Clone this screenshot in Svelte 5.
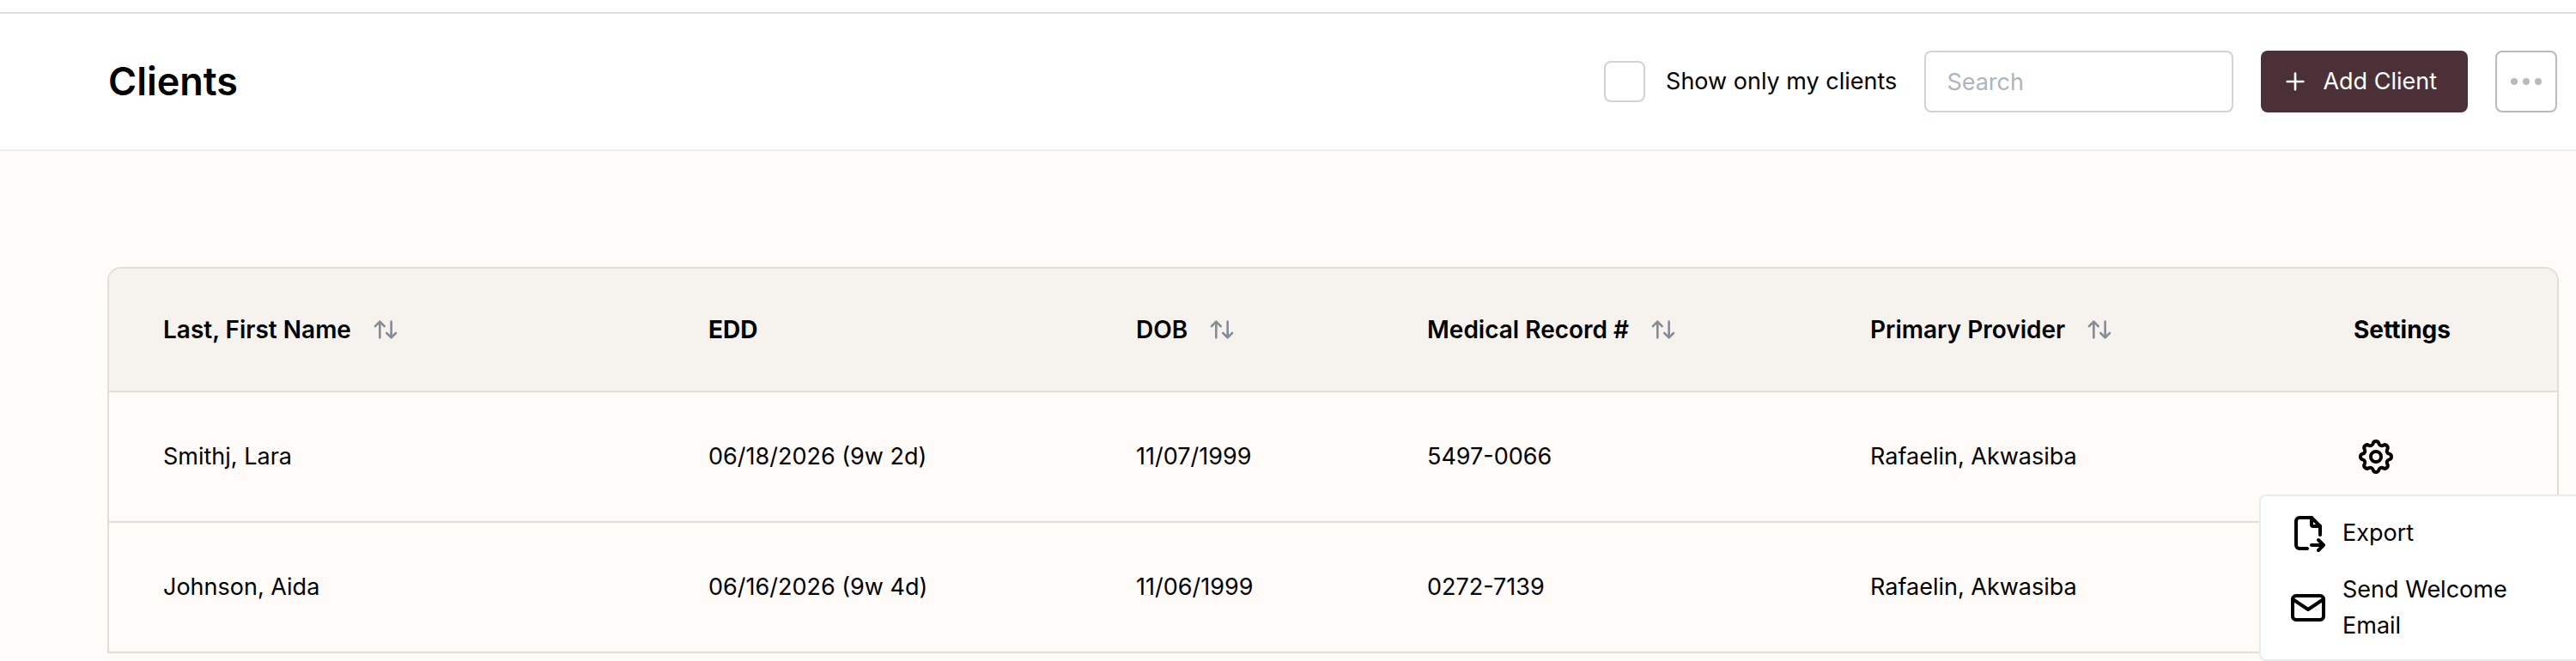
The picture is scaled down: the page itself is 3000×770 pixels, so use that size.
<script lang="ts">
  type Client = {
    name: string;
    edd: string;
    dob: string;
    record: string;
    provider: string;
  };

  const columns = [
    { label: "Last, First Name", sortable: true, width: 635 },
    { label: "EDD", sortable: false, width: 498 },
    { label: "DOB", sortable: true, width: 339 },
    { label: "Medical Record #", sortable: true, width: 516 },
    { label: "Primary Provider", sortable: true, width: 563 },
    { label: "Settings", sortable: false, width: 300 },
  ];

  const clients: Client[] = [
    {
      name: "Smithj, Lara",
      edd: "06/18/2026 (9w 2d)",
      dob: "11/07/1999",
      record: "5497-0066",
      provider: "Rafaelin, Akwasiba",
    },
    {
      name: "Johnson, Aida",
      edd: "06/16/2026 (9w 4d)",
      dob: "11/06/1999",
      record: "0272-7139",
      provider: "Rafaelin, Akwasiba",
    },
  ];

  let onlyMine = $state(false);
  let search = $state("");
  let openMenu = $state<number | null>(0);

  const visible = $derived(
    clients.filter((c) => c.name.toLowerCase().includes(search.toLowerCase())),
  );

  function toggleMenu(i: number) {
    openMenu = openMenu === i ? null : i;
  }
</script>

<div class="page">
  <header class="topbar">
    <h1>Clients</h1>
    <div class="actions">
      <label class="toggle">
        <input type="checkbox" bind:checked={onlyMine} />
        <span>Show only my clients</span>
      </label>
      <input
        class="search"
        type="text"
        placeholder="Search"
        aria-label="Search"
        bind:value={search}
      />
      <button class="add" type="button">
        <svg class="icon-sm" viewBox="0 0 24 24" aria-hidden="true">
          <path d="M12 5v14M5 12h14" />
        </svg>
        Add Client
      </button>
      <button class="more" type="button" aria-label="More actions">
        <svg viewBox="0 0 36 12" aria-hidden="true">
          <circle cx="4" cy="6" r="4" />
          <circle cx="18" cy="6" r="4" />
          <circle cx="32" cy="6" r="4" />
        </svg>
      </button>
    </div>
  </header>

  <main>
    <div class="card">
      <table>
        <colgroup>
          {#each columns as col (col.label)}
            <col style="width:{col.width}px" />
          {/each}
        </colgroup>
        <thead>
          <tr>
            {#each columns as col (col.label)}
              <th scope="col">
                {#if col.sortable}
                  <button class="sort" type="button">
                    {col.label}
                    <svg class="icon-sm" viewBox="0 0 24 24" aria-hidden="true">
                      <path d="M3 9l4-4 4 4M7 5v14M21 15l-4 4-4-4M17 19V5" />
                    </svg>
                  </button>
                {:else}
                  {col.label}
                {/if}
              </th>
            {/each}
          </tr>
        </thead>
        <tbody>
          {#each visible as client, i (client.record)}
            <tr>
              <td>{client.name}</td>
              <td>{client.edd}</td>
              <td>{client.dob}</td>
              <td>{client.record}</td>
              <td>{client.provider}</td>
              <td>
                <div class="settings">
                  <button
                    class="gear"
                    type="button"
                    aria-label="Settings for {client.name}"
                    aria-expanded={openMenu === i}
                    onclick={() => toggleMenu(i)}
                  >
                    <svg class="icon" viewBox="0 0 24 24" aria-hidden="true">
                      <path
                        d="M10.325 4.317c.426-1.756 2.924-1.756 3.35 0a1.724 1.724 0 0 0 2.573 1.066c1.543-.94 3.31.826 2.37 2.37a1.724 1.724 0 0 0 1.065 2.572c1.756.426 1.756 2.924 0 3.35a1.724 1.724 0 0 0-1.066 2.573c.94 1.543-.826 3.31-2.37 2.37a1.724 1.724 0 0 0-2.572 1.065c-.426 1.756-2.924 1.756-3.35 0a1.724 1.724 0 0 0-2.573-1.066c-1.543.94-3.31-.826-2.37-2.37a1.724 1.724 0 0 0-1.065-2.572c-1.756-.426-1.756-2.924 0-3.35a1.724 1.724 0 0 0 1.066-2.573c-.94-1.543.826-3.31 2.37-2.37 1 .608 2.296.07 2.572-1.065z"
                      />
                      <circle cx="12" cy="12" r="3" />
                    </svg>
                  </button>
                  {#if openMenu === i}
                    <div class="menu">
                      <button type="button">
                        <svg class="icon" viewBox="0 0 24 24" aria-hidden="true">
                          <path d="M14 3v4a1 1 0 0 0 1 1h4" />
                          <path
                            d="M11.5 21H7a2 2 0 0 1-2-2V5a2 2 0 0 1 2-2h7l5 5v5m-5 6h7m-3-3l3 3-3 3"
                          />
                        </svg>
                        <span>Export</span>
                      </button>
                      <button type="button">
                        <svg class="icon" viewBox="0 0 24 24" aria-hidden="true">
                          <path
                            d="M3 7a2 2 0 0 1 2-2h14a2 2 0 0 1 2 2v10a2 2 0 0 1-2 2H5a2 2 0 0 1-2-2z"
                          />
                          <path d="M3 7l9 6 9-6" />
                        </svg>
                        <span>Send Welcome Email</span>
                      </button>
                    </div>
                  {/if}
                </div>
              </td>
            </tr>
          {/each}
        </tbody>
      </table>
    </div>
  </main>
</div>

<style>
  :global(body) {
    background: #fffbf8;
  }
  .page {
    box-sizing: border-box;
    height: 100vh;
    overflow: hidden;
    padding-top: 14px;
    background: linear-gradient(#fff 14px, transparent 14px);
    font-family: Inter, sans-serif;
    font-size: 27px;
    line-height: 42px;
    color: #000;
  }
  button,
  input {
    font: inherit;
    color: inherit;
    box-sizing: border-box;
    margin: 0;
  }
  button {
    padding: 0;
    border: 0;
    background: none;
    cursor: pointer;
  }
  svg {
    display: block;
    flex-shrink: 0;
  }
  .icon,
  .icon-sm {
    fill: none;
    stroke: currentColor;
    stroke-linecap: round;
    stroke-linejoin: round;
  }
  .icon {
    width: 48px;
    height: 48px;
    stroke-width: 2;
  }
  .icon-sm {
    width: 32px;
    height: 32px;
    stroke-width: 2;
  }
  .topbar {
    display: flex;
    align-items: center;
    justify-content: space-between;
    padding: 43px 22px 43px 126px;
    border-top: 2px solid #e2dedb;
    border-bottom: 2px solid #f0ecea;
    background: #fff;
  }
  h1 {
    margin: 0;
    font-size: 45px;
    line-height: 56px;
    font-weight: 600;
  }
  .actions {
    display: flex;
    align-items: center;
    gap: 32px;
  }
  .toggle {
    display: flex;
    align-items: center;
    gap: 24px;
  }
  .toggle input {
    appearance: none;
    width: 48px;
    height: 48px;
    border: 2px solid #ced4da;
    border-radius: 8px;
    background: #fff;
  }
  .toggle input:checked {
    background: #4c3038;
  }
  .search {
    width: 360px;
    height: 72px;
    padding: 0 24px;
    border: 2px solid #ced4da;
    border-radius: 8px;
    background: #fff;
  }
  .search::placeholder {
    color: #adb5bd;
  }
  .add {
    display: flex;
    align-items: center;
    gap: 16px;
    height: 72px;
    padding: 0 36px 0 24px;
    border-radius: 8px;
    background: #4c3038;
    color: #fff;
  }
  .more {
    display: grid;
    place-items: center;
    width: 72px;
    height: 72px;
    border: 2px solid #bdb9b5;
    border-radius: 8px;
  }
  .more svg {
    width: 36px;
    height: 12px;
    fill: #bdb9b5;
  }
  main {
    padding: 135px 20px 0 125px;
  }
  .card {
    border: 2px solid #e1deda;
    border-radius: 16px 16px 0 0;
    border-bottom: 0;
  }
  table {
    width: 100%;
    table-layout: fixed;
    border-collapse: separate;
    border-spacing: 0;
    text-align: left;
  }
  th,
  td {
    box-sizing: border-box;
    padding: 0 0 0 63px;
    border-bottom: 2px solid #e1deda;
  }
  th {
    height: 144px;
    background: #f6f3ee;
    font-size: 28px;
    font-weight: 700;
  }
  th:first-child {
    border-top-left-radius: 14px;
  }
  th:last-child {
    border-top-right-radius: 14px;
  }
  td {
    height: 152px;
  }
  .sort {
    display: flex;
    align-items: center;
    gap: 24px;
    font-weight: 600;
  }
  .sort svg {
    color: #868e96;
  }
  .settings {
    position: relative;
  }
  .gear {
    display: block;
    padding: 2px;
  }
  .menu {
    position: absolute;
    z-index: 1;
    top: 70px;
    left: -110px;
    box-sizing: border-box;
    width: 400px;
    padding: 10px 0 6px;
    border: 2px solid #e9ecef;
    border-radius: 8px;
    background: #fff;
  }
  .menu button {
    display: flex;
    align-items: center;
    gap: 16px;
    width: 100%;
    padding: 12px 60px 12px 31px;
    text-align: left;
  }
  .menu .icon {
    margin: -3px 0;
  }
</style>
